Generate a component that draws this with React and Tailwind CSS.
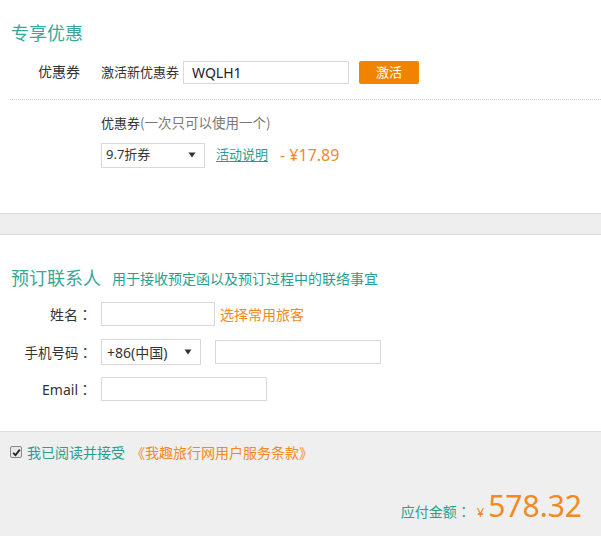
import React from "react";

const font = { fontFamily: '"Noto Sans", "Noto Sans CJK SC", sans-serif' };
const cjk = { fontFamily: '"Noto Sans CJK SC", sans-serif' };
const colon = { fontFamily: '"Noto Sans CJK JP", sans-serif' };

function Caret() {
  return (
    <svg width="8" height="6" viewBox="0 0 8 6" className="shrink-0">
      <path d="M0.5 0.5 L7.5 0.5 L4 5.5 Z" fill="#333" />
    </svg>
  );
}

export default function App() {
  return (
    <div className="w-[601px] h-[536px] bg-white text-[13px] text-[#333] overflow-hidden" style={font}>
      {/* Section 1 */}
      <section className="h-[213px] pt-[21px]">
        <h2 className="h-6 leading-6 pl-[11px] text-[18px] text-[#36a89c] font-normal">专享优惠</h2>
        <div className="mt-[16px] h-[22px] flex items-center">
          <span className="w-[80px] text-right leading-[22px] text-[14px]">优惠券</span>
          <span className="ml-[21px] leading-[22px]">激活新优惠券</span>
          <div className="ml-[4px] w-[166px] h-[23px] border border-[#d9d9d9] flex items-center pl-[8px] text-[14px] text-[#222]">WQLH1</div>
          <button className="ml-[10px] w-[60px] h-[23px] bg-[#f08300] text-white text-[13px] rounded-[2px] leading-[23px]">激活</button>
        </div>
        <div className="mt-[16px] ml-[10px] border-t border-dotted border-[#cfcfcf]" />
        <div className="mt-[12px] pl-[101px] h-5 leading-5">
          <span className="text-[#333]">优惠券</span>
          <span className="text-[#777] text-[13.5px]" style={cjk}>(一次只可以使用一个)</span>
        </div>
        <div className="mt-[11px] pl-[101px] h-[24px] flex items-center">
          <div className="w-[104px] h-[25px] border border-[#d9d9d9] flex items-center justify-between pl-[4px] pr-[8px] text-[#333]">
            <span>9.7折券</span>
            <Caret />
          </div>
          <a className="ml-[11px] text-[#2a9d94] underline underline-offset-2">活动说明</a>
          <span className="ml-[12px] text-[16px] text-[#ef8a24]">- ¥17.89</span>
        </div>
      </section>

      {/* Gray band */}
      <div className="h-[22px] bg-[#eeeeee] border-y border-[#dcdcdc]" />

      {/* Section 2 */}
      <section className="h-[196px] pt-[31px]">
        <div className="h-6 flex items-end pl-[11px]">
          <h2 className="text-[18px] leading-6 text-[#36a89c] font-normal">预订联系人</h2>
          <span className="ml-[11px] text-[14px] leading-[22px] text-[#27a08f]">用于接收预定函以及预订过程中的联络事宜</span>
        </div>
        <div className="mt-[12px] h-[24px] flex items-center">
          <span className="w-[92px] text-right text-[14px]" style={cjk}>
            姓名<span style={colon}>：</span>
          </span>
          <div className="ml-[9px] w-[114px] h-[24px] border border-[#d9d9d9]" />
          <span className="ml-[5px] text-[14px] text-[#ef8a24]">选择常用旅客</span>
        </div>
        <div className="mt-[14px] h-[24px] flex items-center">
          <span className="w-[92px] text-right text-[13.5px]" style={cjk}>
            手机号码<span style={colon}>：</span>
          </span>
          <div className="ml-[9px] w-[100px] h-[26px] border border-[#d9d9d9] flex items-center justify-between pl-[5px] pr-[8px] text-[14px]">
            <span>+86(中国)</span>
            <Caret />
          </div>
          <div className="ml-[14px] w-[166px] h-[24px] border border-[#d9d9d9]" />
        </div>
        <div className="mt-[13px] h-[24px] flex items-center">
          <span className="w-[92px] text-right text-[14px]">
            Email<span style={colon}>：</span>
          </span>
          <div className="ml-[9px] w-[166px] h-[24px] border border-[#d9d9d9]" />
        </div>
      </section>

      {/* Bottom */}
      <section className="h-[105px] bg-[#efefef] border-t border-[#dcdcdc]">
        <div className="mt-[10px] pl-[10px] h-5 flex items-center">
          <span className="w-[12px] h-[12px] border border-[#8a8a8a] bg-[#e8e8e8] rounded-[2px] flex items-center justify-center">
            <svg width="9" height="9" viewBox="0 0 9 9">
              <path d="M1.2 4.8 L3.5 7.2 L7.8 1.6" fill="none" stroke="#222" strokeWidth="1.8" />
            </svg>
          </span>
          <span className="ml-[5px] text-[14px] text-[#27a08f]">我已阅读并接受</span>
          <span className="ml-[6px] text-[14px] text-[#ef8a24]">《我趣旅行网用户服务条款》</span>
        </div>
        <div className="mt-[24px] pr-[19px] h-[40px] flex items-baseline justify-end">
          <span className="text-[14px] text-[#27a08f]" style={cjk}>
            应付金额<span style={colon}>：</span>
          </span>
          <span className="ml-[6px] text-[13px] text-[#ef8a24]">¥</span>
          <span className="ml-[4px] text-[30px] leading-[40px] text-[#ef8a24]">578.32</span>
        </div>
      </section>
    </div>
  );
}
